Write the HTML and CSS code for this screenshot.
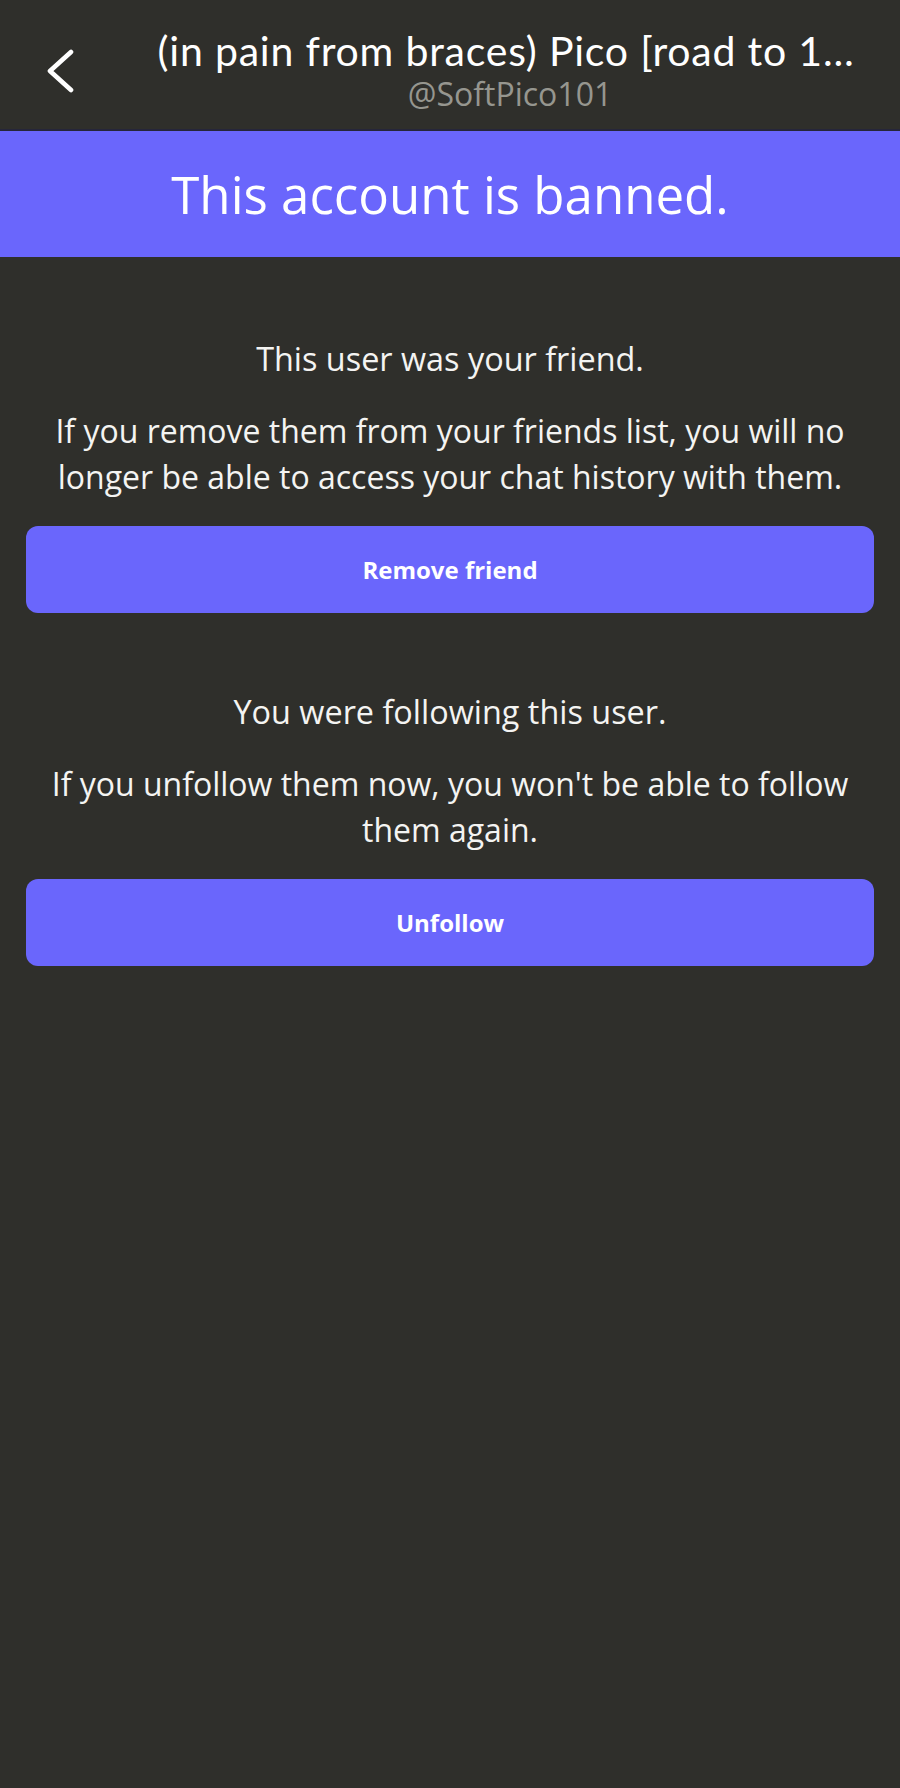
FILE: index.html
```html
<!DOCTYPE html>
<html lang="en">
<head>
<meta charset="utf-8">
<title>This account is banned</title>
<link rel="stylesheet" href="styles.css">
</head>
<body>
<header class="topbar">
  <button class="back" aria-label="Back">
    <svg class="back-icon" width="30" height="44" viewBox="0 0 30 44" aria-hidden="true">
      <path d="M25 3 L4 22 L25 41" fill="none" stroke="#ffffff" stroke-width="4.6" stroke-linecap="round" stroke-linejoin="round"/>
    </svg>
  </button>
  <div class="titles">
    <div class="name">(in pain from braces) Pico [road to 1…</div>
    <div class="handle">@SoftPico101</div>
  </div>
</header>
<div class="banner">This account is banned.</div>
<main class="content">
  <section class="block">
    <p class="lead">This user was your friend.</p>
    <p class="desc">If you remove them from your friends list, you will no longer be able to access your chat history with them.</p>
    <button class="action">Remove friend</button>
  </section>
  <section class="block">
    <p class="lead">You were following this user.</p>
    <p class="desc">If you unfollow them now, you won't be able to follow them again.</p>
    <button class="action">Unfollow</button>
  </section>
</main>
</body>
</html>
```
FILE: styles.css
```css
html, body {
  margin: 0;
  padding: 0;
  background: #2f2f2b;
}
body {
  width: 900px;
  min-height: 1788px;
  font-family: "Open Sans", "Noto Sans", sans-serif;
  color: #ffffff;
}
.topbar {
  display: flex;
  align-items: flex-start;
  height: 131px;
  box-sizing: border-box;
  padding-top: 26px;
  background: #2f2f2b;
}
.back {
  flex: 0 0 112px;
  display: flex;
  padding: 23px 0 0 46px;
  margin: 0;
  border: 0;
  background: none;
  cursor: pointer;
}
.back-icon {
  display: block;
}
.titles {
  flex: 1;
  min-width: 0;
  text-align: center;
}
.name {
  font-family: "Lato", sans-serif;
  font-size: 41px;
  line-height: 49px;
  letter-spacing: 0.8px;
  white-space: nowrap;
  overflow: hidden;
  color: #ffffff;
}
.handle {
  font-size: 32px;
  line-height: 38px;
  color: #96968f;
  padding-left: 8px;
}
.banner {
  height: 126px;
  display: flex;
  align-items: center;
  justify-content: center;
  background: #6a66fc;
  box-shadow: 0 -2px 0 #26263a;
  font-size: 51px;
  color: #ffffff;
}
.content {
  padding: 0 26px;
}
.block {
  display: flex;
  flex-direction: column;
  align-items: stretch;
  padding-top: 79px;
}
.block + .block {
  padding-top: 76px;
}
.lead, .desc {
  margin: 0;
  text-align: center;
  font-size: 32px;
  line-height: 45px;
  color: #f4f4f2;
}
.lead {
  font-size: 32.4px;
}
.desc {
  margin-top: 27px;
  line-height: 45.5px;
}
.action {
  margin-top: 27px;
  height: 87px;
  border: 0;
  border-radius: 12px;
  background: #6a66fc;
  color: #ffffff;
  font-family: "Open Sans", "Noto Sans", sans-serif;
  font-weight: 700;
  font-size: 24px;
  cursor: pointer;
}
```
